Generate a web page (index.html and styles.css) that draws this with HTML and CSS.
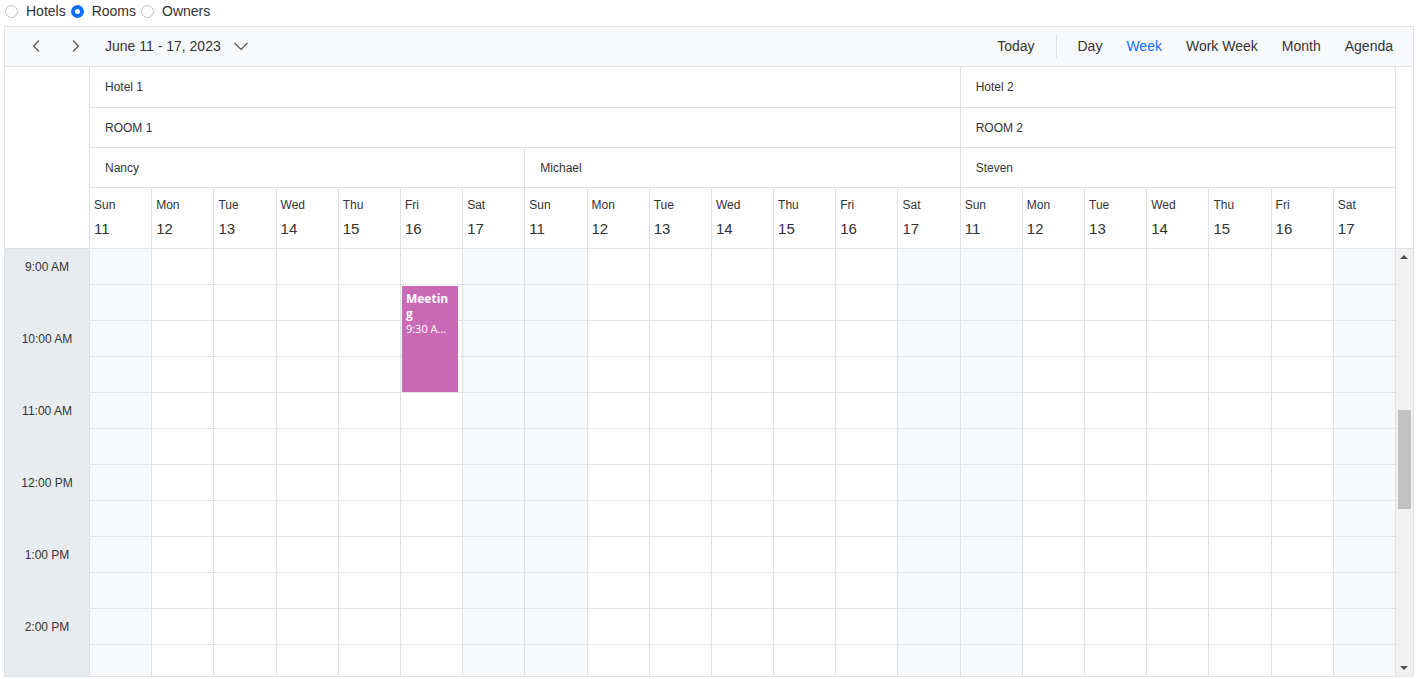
FILE: index.html
```html
<!DOCTYPE html>
<html lang="en">
<head>
    <meta charset="UTF-8">
    <title>Scheduler</title>
    <link rel="stylesheet" href="styles.css">
</head>
<body>
    <!--resource grouping options-->
    <div class="options">
        <label class="radio"><span class="dot"></span>Hotels</label>
        <label class="radio"><span class="dot checked"></span>Rooms</label>
        <label class="radio"><span class="dot"></span>Owners</label>
    </div>

    <div class="scheduler">
        <div class="toolbar">
            <div class="left">
                <span class="navBtn">
                    <svg width="14" height="14" viewBox="0 0 14 14"><path d="M9 1.5 3.5 7 9 12.5" fill="none" stroke="#555" stroke-width="1.2"/></svg>
                </span>
                <span class="navBtn">
                    <svg width="14" height="14" viewBox="0 0 14 14"><path d="M5 1.5 10.5 7 5 12.5" fill="none" stroke="#555" stroke-width="1.2"/></svg>
                </span>
                <span class="dateRange">June 11 - 17, 2023</span>
                <span class="dropdown">
                    <svg width="16" height="16" viewBox="0 0 16 16"><path d="M1.5 5 8 11.5 14.5 5" fill="none" stroke="#555" stroke-width="1.2"/></svg>
                </span>
            </div>
            <div class="right">
                <span class="tbItem">Today</span>
                <span class="sep"></span>
                <span class="tbItem">Day</span>
                <span class="tbItem active">Week</span>
                <span class="tbItem">Work Week</span>
                <span class="tbItem">Month</span>
                <span class="tbItem">Agenda</span>
            </div>
        </div>

        <!--resource + date header-->
        <div class="header">
            <div class="corner"></div>
            <div class="resRow">
                <div class="resCell span14">Hotel 1</div>
                <div class="resCell span7">Hotel 2</div>
            </div>
            <div class="resRow">
                <div class="resCell span14">ROOM 1</div>
                <div class="resCell span7">ROOM 2</div>
            </div>
            <div class="resRow">
                <div class="resCell span7">Nancy</div>
                <div class="resCell span7">Michael</div>
                <div class="resCell span7">Steven</div>
            </div>
            <div class="dateRow" id="dateRow"></div>
            <div class="scrollGap"></div>
        </div>

        <div class="body">
            <div class="times" id="times"></div>
            <div class="content" id="content">
                <div class="event">
                    <div class="subject">Meeting</div>
                    <div class="time">9:30 A...</div>
                </div>
            </div>
            <div class="scrollbar">
                <span class="arrow up"></span>
                <span class="thumb"></span>
                <span class="arrow down"></span>
            </div>
        </div>
    </div>

    <script>
        var days = ['Sun','Mon','Tue','Wed','Thu','Fri','Sat'];
        var hours = ['9:00 AM','10:00 AM','11:00 AM','12:00 PM','1:00 PM','2:00 PM'];
        var dateRow = document.getElementById('dateRow');
        var content = document.getElementById('content');
        var times = document.getElementById('times');
        var html = '';

        for(var r = 0;r < 3;r++){
            for(var d = 0;d < 7;d++){
                html += '<div class="dateCell"><div class="dayName">' + days[d] + '</div><div class="dayNum">' + (11 + d) + '</div></div>';
            }
        }
        dateRow.innerHTML = html;

        //one column per day, two slots per hour
        var cols = '';
        for(var c = 0;c < 21;c++){
            var weekend = (c % 7 == 0 || c % 7 == 6);
            cols += '<div class="col' + (weekend ? ' weekend' : '') + '">';
            for(var s = 0;s < hours.length * 2;s++){
                cols += '<div class="slot' + (s % 2 == 0 ? ' half' : '') + '"></div>';
            }
            cols += '</div>';
        }
        content.insertAdjacentHTML('afterbegin', cols);

        var t = '';
        for(var h = 0;h < hours.length;h++){
            t += '<div class="timeCell"><span>' + hours[h] + '</span></div>';
        }
        times.innerHTML = t;
    </script>
</body>
</html>
```

FILE: styles.css
```css
*{
    padding: 0;
    margin: 0;
    box-sizing: border-box;
}
body{
    font-family: "Segoe UI", "Liberation Sans", Arial, sans-serif;
    color: #333;
    background: #fff;
}
.options{
    height: 22px;
    display: flex;
    align-items: center;
    padding-left: 5px;
    font-size: 14px;
    color: #333;
}
.options .radio{
    display: flex;
    align-items: center;
    margin-right: 5px;
}
.options .dot{
    width: 13px;
    height: 13px;
    border-radius: 50%;
    border: 1px solid #c4c4c4;
    margin-right: 8px;
    background: #fff;
}
.options .dot.checked{
    border: 4px solid #0d6efd;
}
.scheduler{
    margin: 4px 3px 0 4px;
    border: 1px solid #dee2e6;
    height: 651px;
    display: flex;
    flex-direction: column;
    overflow: hidden;
}
.toolbar{
    height: 40px;
    flex: none;
    background: #f8f9fa;
    border-bottom: 1px solid #dee2e6;
    padding-bottom: 2px;
    display: flex;
    justify-content: space-between;
    align-items: center;
    font-size: 14px;
    color: #333;
}
.toolbar .left{
    display: flex;
    align-items: center;
    padding-left: 13px;
}
.toolbar .navBtn{
    width: 38px;
    height: 30px;
    display: flex;
    align-items: center;
    justify-content: center;
}
.toolbar .dateRange{
    margin-left: 11px;
}
.toolbar .dropdown{
    margin-left: 12px;
    display: flex;
    align-items: center;
}
.toolbar .right{
    display: flex;
    align-items: center;
    padding-right: 8px;
}
.toolbar .tbItem{
    padding: 0 12px;
    line-height: 30px;
}
.toolbar .tbItem.active{
    color: #0d6efd;
}
.toolbar .sep{
    width: 1px;
    height: 24px;
    background: #dee2e6;
    margin: 0 9px;
}
.header{
    flex: none;
    display: grid;
    grid-template-columns: 85px 1fr 17px;
    grid-template-rows: 41px 40px 40px 61px;
}
.header .corner{
    grid-column: 1;
    grid-row: 1 / 5;
    border-right: 1px solid #dee2e6;
    border-bottom: 1px solid #dee2e6;
}
.header .scrollGap{
    grid-column: 3;
    grid-row: 1 / 5;
    border-bottom: 1px solid #dee2e6;
}
.resRow,
.dateRow{
    grid-column: 2;
    display: grid;
    grid-template-columns: repeat(21, 1fr);
}
.resCell{
    border-right: 1px solid #dee2e6;
    border-bottom: 1px solid #dee2e6;
    font-size: 12px;
    padding-left: 15px;
    display: flex;
    align-items: center;
}
.resRow:first-child .resCell{
    padding-top: 1px;
}
.resCell.span7{
    grid-column: span 7;
}
.resCell.span14{
    grid-column: span 14;
}
.dateCell{
    border-right: 1px solid #dee2e6;
    border-bottom: 1px solid #dee2e6;
    padding: 9px 0 0 4px;
}
.dateCell .dayName{
    font-size: 12px;
    line-height: 16px;
}
.dateCell .dayNum{
    font-size: 15px;
    line-height: 18px;
    margin-top: 7px;
}
.body{
    flex: 1;
    display: flex;
    overflow: hidden;
}
.times{
    width: 85px;
    flex: none;
    background: #e9ecef;
    border-right: 1px solid #dee2e6;
}
.timeCell{
    height: 72px;
    font-size: 12px;
    text-align: center;
}
.timeCell span{
    display: block;
    line-height: 36px;
}
.content{
    flex: 1;
    position: relative;
    display: grid;
    grid-template-columns: repeat(21, 1fr);
    align-content: start;
}
.col{
    border-right: 1px solid #dee2e6;
}
.col.weekend{
    background: #f8f9fa;
}
.slot{
    height: 36px;
    border-bottom: 1px solid #dee2e6;
}
.slot.half{
    border-bottom: 1px dotted #d4d7da;
}
.event{
    position: absolute;
    top: 37px;
    left: calc(100% * 5 / 21 + 1px);
    width: 56px;
    height: 106px;
    background: #c96ab4;
    color: #fff;
    padding: 5px 4px;
    font-family: "Open Sans", "Liberation Sans", sans-serif;
}
.event .subject{
    font-size: 12px;
    font-weight: bold;
    line-height: 15px;
    word-break: break-all;
}
.event .time{
    font-size: 11px;
    line-height: 15px;
}
.scrollbar{
    width: 17px;
    flex: none;
    background: #f1f1f1;
    position: relative;
}
.scrollbar .thumb{
    position: absolute;
    left: 2px;
    right: 2px;
    top: 161px;
    height: 99px;
    background: #c1c1c1;
}
.scrollbar .arrow{
    position: absolute;
    left: 4px;
    width: 0;
    height: 0;
    border-left: 4px solid transparent;
    border-right: 4px solid transparent;
}
.scrollbar .up{
    top: 6px;
    border-bottom: 4px solid #505050;
}
.scrollbar .down{
    bottom: 6px;
    border-top: 4px solid #505050;
}
```
